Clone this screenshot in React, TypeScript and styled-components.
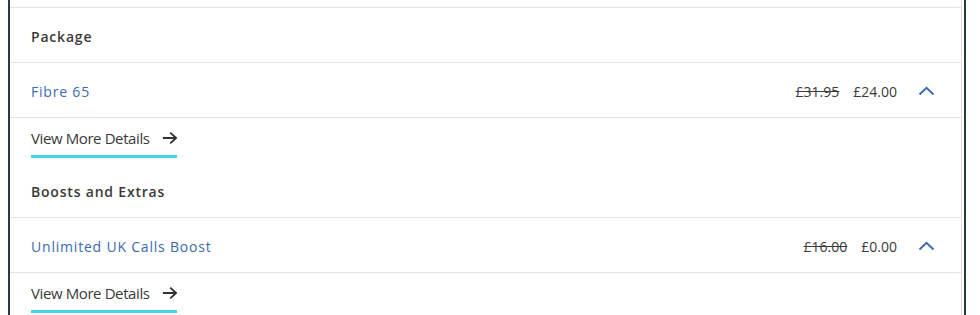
import React from "react";
import styled, { createGlobalStyle } from "styled-components";

const Global = createGlobalStyle`
  body { margin: 0; background: #fff; font-family: "Open Sans", sans-serif; }
`;

const Frame = styled.div`
  margin-left: 8px;
  width: 954px;
  border-left: 2px solid #2b3a3f;
  border-right: 2px solid #2b3a3f;
  height: 315px;
  overflow: hidden;
  box-sizing: content-box;
`;

const Inner = styled.div`
  width: 952px;
  border-right: 1px solid #e2e2e2;
  box-sizing: border-box;
  padding-top: 7px;
  min-height: 315px;
`;

const TopRule = styled.div`
  border-top: 1px solid #e2e2e2;
`;

const SectionHeader = styled.div`
  height: 55px;
  display: flex;
  align-items: center;
  padding: 2px 0 0 21px;
  box-sizing: border-box;
  border-bottom: 1px solid #e2e2e2;
  font-size: 14px;
  font-weight: 600;
  color: #3a3a3a;
  letter-spacing: 0.8px;
`;

const ItemRow = styled.div`
  height: 55px;
  box-sizing: border-box;
  display: flex;
  align-items: center;
  padding: 2px 26px 0 21px;
  border-bottom: 1px solid #e2e2e2;
`;

const ItemName = styled.div`
  flex: 1;
  font-size: 14px;
  color: #3b6bb0;
  letter-spacing: 0.8px;
`;

const Price = styled.span<{ $old?: boolean }>`
  font-size: 14px;
  color: #3a3a3a;
  margin-right: 14px;
  text-decoration: ${(p) => (p.$old ? "line-through" : "none")};
`;

const Chevron = styled.svg`
  margin-left: 7px;
  display: block;
`;

const Details = styled.div`
  height: 45px;
  padding-left: 21px;
  padding-top: 9px;
  box-sizing: border-box;
`;

const DetailsLink = styled.a`
  display: inline-flex;
  align-items: center;
  gap: 12px;
  padding-bottom: 6px;
  border-bottom: 3px solid #3dd8e6;
  font-family: "Open Sans", sans-serif;
  font-size: 15px;
  color: #3a3a3a;
  letter-spacing: -0.4px;
  text-decoration: none;
  line-height: 22px;
  width: 146px;
  box-sizing: border-box;
  white-space: nowrap;
`;

const Arrow = () => (
  <svg width="17" height="14" viewBox="0 0 17 14" fill="none">
    <path d="M1 7h14.5M9 1L15.5 7 9 13" stroke="#333" strokeWidth="2" />
  </svg>
);

const Up = () => (
  <Chevron width="17" height="10" viewBox="0 0 17 10" fill="none">
    <path d="M1.5 8.5L8.5 1.8l7 6.7" stroke="#3b6bb0" strokeWidth="2" />
  </Chevron>
);

type Section = { title: string; name: string; oldPrice: string; price: string };

const sections: Section[] = [
  { title: "Package", name: "Fibre 65", oldPrice: "£31.95", price: "£24.00" },
  { title: "Boosts and Extras", name: "Unlimited UK Calls Boost", oldPrice: "£16.00", price: "£0.00" },
];

export default function App() {
  return (
    <>
      <Global />
      <Frame>
        <Inner>
          <TopRule />
          {sections.map((s) => (
            <React.Fragment key={s.title}>
              <SectionHeader>{s.title}</SectionHeader>
              <ItemRow>
                <ItemName>{s.name}</ItemName>
                <Price $old>{s.oldPrice}</Price>
                <Price>{s.price}</Price>
                <Up />
              </ItemRow>
              <Details>
                <DetailsLink href="#">
                  View More Details
                  <Arrow />
                </DetailsLink>
              </Details>
            </React.Fragment>
          ))}
        </Inner>
      </Frame>
    </>
  );
}
